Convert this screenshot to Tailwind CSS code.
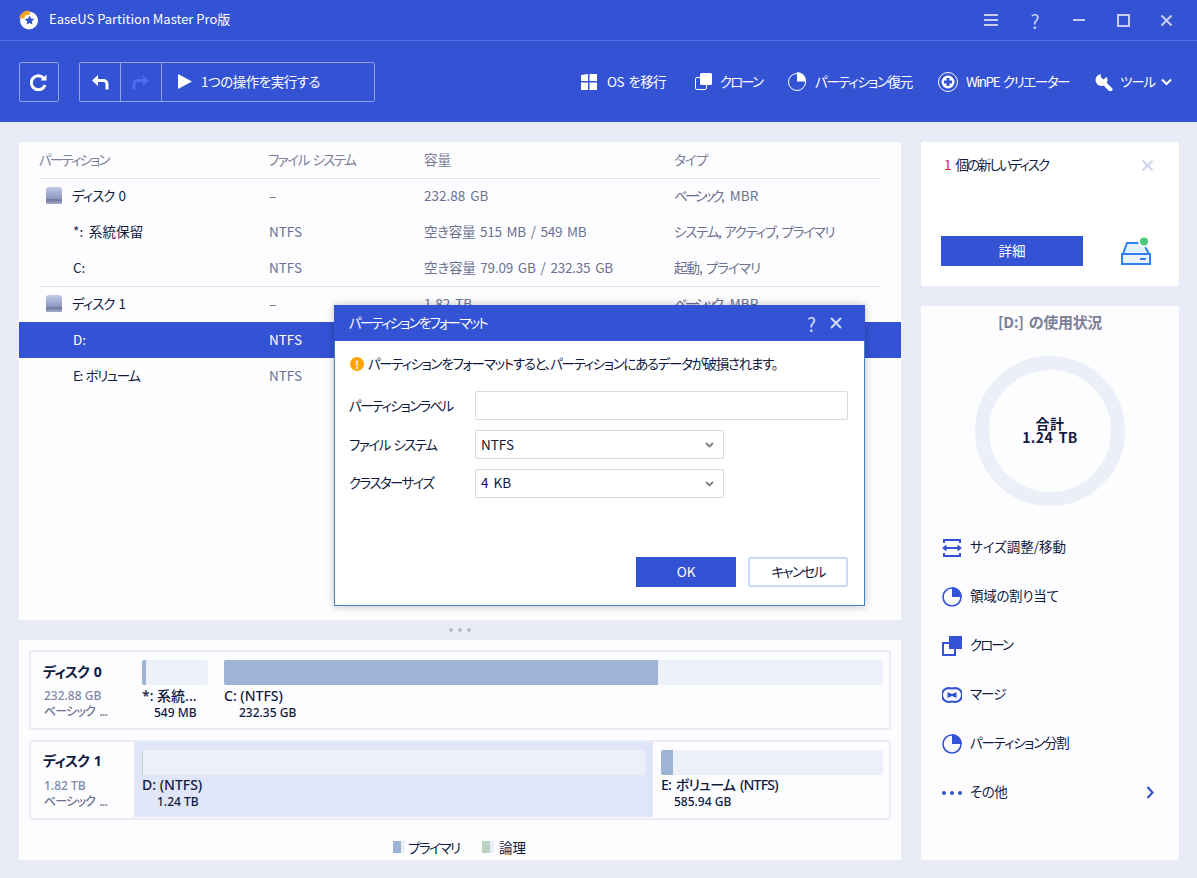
<!DOCTYPE html>
<html lang="ja">
<head>
    <meta charset="UTF-8">
    <title>EaseUS Partition Master</title>
    <script src="https://cdn.jsdelivr.net/npm/@tailwindcss/browser@4"></script>
</head>
<body class="bg-[#e9ecf7] overflow-hidden">
<div class="relative w-[1197px] h-[878px] text-[13.5px] text-[#101a3e] [word-spacing:2px] [font-feature-settings:'palt'] font-['Noto_Sans_CJK_JP','Noto_Sans',sans-serif]">

    <!-- Header -->
    <header class="h-[122px] bg-[#3353d4] text-white">
        <div class="h-[41px] border-b border-[#4f6fe4] flex items-center">
            <svg class="ml-[19px] w-[20px] h-[20px]" viewBox="0 0 20 20">
                <circle cx="10" cy="10.5" r="9" fill="#fff"/>
                <path d="M0 8A10 10 0 0 1 10 .5L11 4.500 6.500 5.500 5 8.500z" fill="#f5a623"/>
                <path d="M10.500 5.500l1.500 3 3.300.4-2.400 2.300.6 3.300-3-1.600-3 1.600.6-3.300-2.400-2.300 3.300-.4z" fill="#3353d4"/>
            </svg>
            <span class="ml-[10px] text-[13px] pb-[2px] [word-spacing:0]">EaseUS Partition Master Pro版</span>
            <div class="ml-auto flex items-center text-[#c5cff3]">
                <svg class="w-[14px] h-[12px]" viewBox="0 0 14 12" fill="currentColor"><path d="M0 0h14v2H0zM0 5h14v2H0zM0 10h14v2H0z"/></svg>
                <span class="ml-[30px] w-[14px] text-[19px] leading-none text-center">?</span>
                <svg class="ml-[30px] w-[14px] h-[2px]" viewBox="0 0 14 2" fill="currentColor"><path d="M1 0h12v2H1z"/></svg>
                <svg class="ml-[31px] w-[13px] h-[13px]" viewBox="0 0 13 13" fill="none" stroke="currentColor" stroke-width="2"><path d="M1 1h11v11H1z"/></svg>
                <svg class="ml-[30px] mr-[24px] w-[13px] h-[13px]" viewBox="0 0 13 13" fill="none" stroke="currentColor" stroke-width="2"><path d="M1.500 1.500l10 10M11.500 1.500l-10 10"/></svg>
            </div>
        </div>
        <div class="h-[81px] flex items-center pl-[19px]">
            <button class="w-[40px] h-[40px] border border-[#8fa2e8] rounded-[2px] flex items-center justify-center">
                <svg class="w-[18px] h-[18px]" viewBox="0 0 18 18" fill="none" stroke="#fff" stroke-width="3"><path d="M15 12a7 7 0 1 1-1.500-7"/><path d="M16.500 1.500v6h-6z" fill="#fff" stroke="none"/></svg>
            </button>
            <div class="ml-[20px] w-[296px] h-[40px] border border-[#8fa2e8] rounded-[2px] flex items-center">
                <div class="w-[41px] h-full border-r border-[#8fa2e8] flex items-center justify-center">
                    <svg class="w-[18px] h-[16px]" viewBox="0 0 18 16" fill="none"><path d="M7 1L1 6.500 7 12z" fill="#fff"/><path d="M5 6.500h7.500a3.500 3.500 0 0 1 3.500 3.500v5.500" stroke="#fff" stroke-width="3"/></svg>
                </div>
                <div class="w-[41px] h-full border-r border-[#8fa2e8] flex items-center justify-center">
                    <svg class="w-[18px] h-[16px]" viewBox="0 0 18 16" fill="none"><path d="M11 1l6 5.500L11 12z" fill="#4d6df0"/><path d="M13 6.500H5.500A3.500 3.500 0 0 0 2 10v5.500" stroke="#4d6df0" stroke-width="3"/></svg>
                </div>
                <svg class="ml-[16px] w-[14px] h-[15px]" viewBox="0 0 14 15" fill="#fff"><path d="M0 0l14 7.500L0 15z"/></svg>
                <span class="ml-[9px] tracking-[-0.5px]">1つの操作を実行する</span>
            </div>
            <div class="ml-[206px] flex items-center">
                <div class="w-[114px] flex items-center">
                    <svg class="w-[16px] h-[16px]" viewBox="0 0 16 16" fill="#fff"><path d="M0 1l7-1v7H0zM8.500 0L16 0v7H8.500zM0 8.500h7V16H0zM8.500 8.500H16V16H8.500z"/></svg>
                    <span class="ml-[10px] tracking-[-0.6px]">OS を移行</span>
                </div>
                <div class="w-[93px] flex items-center">
                    <svg class="w-[17px] h-[17px]" viewBox="0 0 17 17"><rect x="0.500" y="4.500" width="11" height="12" rx="1.500" fill="none" stroke="#fff"/><rect x="5" y="0" width="12" height="12" rx="1.500" fill="#fff"/></svg>
                    <span class="ml-[8px] tracking-[-2px]">クローン</span>
                </div>
                <div class="w-[150px] flex items-center">
                    <svg class="w-[18px] h-[19px]" viewBox="0 0 18 19"><circle cx="9" cy="10" r="8.500" fill="none" stroke="#fff"/><path d="M9 0a9 9 0 0 1 9 9.500H9z" fill="#fff"/></svg>
                    <span class="ml-[9px] tracking-[-1.4px]">パーティション復元</span>
                </div>
                <div class="w-[157px] flex items-center">
                    <svg class="w-[20px] h-[20px]" viewBox="0 0 20 20"><circle cx="10" cy="10" r="9.500" fill="none" stroke="#fff"/><circle cx="10" cy="10" r="6.500" fill="#fff"/><path d="M8.500 6h3v2.500H14v3h-2.500V14h-3v-2.500H6v-3h2.500z" fill="#3353d4"/></svg>
                    <span class="ml-[8px] tracking-[-1.4px]">WinPE クリエーター</span>
                </div>
                <div class="flex items-center">
                    <svg class="w-[18px] h-[18px]" viewBox="0 0 18 18"><path d="M8 9l7.500 7.500" stroke="#fff" stroke-width="4" stroke-linecap="round"/><circle cx="6.500" cy="7" r="6" fill="#fff"/><path d="M5.500 -1L6 4.500 8.500 6.500 13.500 2.500 11 -1z" fill="#3353d4"/><path d="M9.500 1l2.500 1.500-1.500 2z" fill="#3353d4"/></svg>
                    <span class="ml-[7px] tracking-[-1.2px]">ツール</span>
                    <svg class="ml-[6px] w-[11px] h-[8px]" viewBox="0 0 11 8" fill="none" stroke="#fff" stroke-width="2"><path d="M1 1.500l4.500 4.500L10 1.500"/></svg>
                </div>
            </div>
        </div>
    </header>

    <main class="pl-[19px] pt-[20px] flex gap-[20px]">
        <!-- Left column -->
        <div class="w-[882px]">
            <section class="h-[478px] bg-[#fdfdff]">
                <div class="mx-[20px] h-[36px] pb-[2px] grid grid-cols-[229px_156px_250px_1fr] items-center text-[#7b8099]">
                    <span class="tracking-[-1.8px]">パーティション</span><span class="tracking-[-1.5px]">ファイル システム</span><span>容量</span><span class="tracking-[-1px]">タイプ</span>
                </div>
                <div class="mx-[20px] h-[36px] pb-[2px] border-t border-[#dfe3f2] grid grid-cols-[229px_156px_250px_1fr] items-center text-[#6b7290]">
                    <span class="flex items-center pl-[7px] text-[#101a3e]">
                        <svg class="w-[16px] h-[17px]" viewBox="0 0 16 17"><defs><linearGradient id="hd" x1="0" y1="0" x2="0" y2="1"><stop offset="0" stop-color="#c3cbe8"/><stop offset=".7" stop-color="#8b95c2"/><stop offset=".75" stop-color="#6a749f"/><stop offset="1" stop-color="#a6aed0"/></linearGradient></defs><path d="M3 0h10a3 3 0 0 1 3 3v13a1 1 0 0 1-1 1H1a1 1 0 0 1-1-1V3a3 3 0 0 1 3-3z" fill="url(#hd)"/></svg>
                        <span class="ml-[10px] tracking-[-1px]">ディスク 0</span>
                    </span>
                    <span class="pl-px">–</span><span>232.88 GB</span><span><span class="tracking-[-3px]">ベーシック</span>, MBR</span>
                </div>
                <div class="mx-[20px] h-[36px] pb-[2px] grid grid-cols-[229px_156px_250px_1fr] items-center text-[#6b7290]">
                    <span class="pl-[34px] text-[#101a3e] tracking-[0.2px]">*: 系統保留</span><span class="pl-px">NTFS</span><span class="tracking-[-0.25px]">空き容量 515 MB / 549 MB</span><span class="tracking-[-1.3px]">システム, アクティブ, プライマリ</span>
                </div>
                <div class="mx-[20px] h-[36px] pb-[2px] grid grid-cols-[229px_156px_250px_1fr] items-center text-[#6b7290]">
                    <span class="pl-[34px] text-[#101a3e]">C:</span><span class="pl-px">NTFS</span><span class="tracking-[-0.2px]">空き容量 79.09 GB / 232.35 GB</span><span class="tracking-[-1px]">起動, プライマリ</span>
                </div>
                <div class="mx-[20px] h-[36px] pb-[2px] border-t border-[#dfe3f2] grid grid-cols-[229px_156px_250px_1fr] items-center text-[#6b7290]">
                    <span class="flex items-center pl-[7px] text-[#101a3e]">
                        <svg class="w-[16px] h-[17px]" viewBox="0 0 16 17"><path d="M3 0h10a3 3 0 0 1 3 3v13a1 1 0 0 1-1 1H1a1 1 0 0 1-1-1V3a3 3 0 0 1 3-3z" fill="url(#hd)"/></svg>
                        <span class="ml-[10px] tracking-[-1px]">ディスク 1</span>
                    </span>
                    <span class="pl-px">–</span><span>1.82 TB</span><span><span class="tracking-[-3px]">ベーシック</span>, MBR</span>
                </div>
                <div class="px-[20px] h-[36px] pb-[2px] bg-[#3353d4] text-white grid grid-cols-[229px_156px_250px_1fr] items-center">
                    <span class="pl-[34px]">D:</span><span class="pl-px">NTFS</span><span></span><span></span>
                </div>
                <div class="mx-[20px] h-[36px] pb-[2px] grid grid-cols-[229px_156px_250px_1fr] items-center text-[#6b7290]">
                    <span class="pl-[34px] text-[#101a3e] tracking-[-1.4px]">E: ボリューム</span><span class="pl-px">NTFS</span><span></span><span></span>
                </div>
            </section>

            <!-- Splitter -->
            <div class="h-[20px] flex items-center justify-center gap-[5px]">
                <i class="w-[4px] h-[4px] rounded-full bg-[#b9bdcb]"></i><i class="w-[4px] h-[4px] rounded-full bg-[#b9bdcb]"></i><i class="w-[4px] h-[4px] rounded-full bg-[#b9bdcb]"></i>
            </div>

            <!-- Disk map -->
            <section class="h-[220px] bg-[#fdfdff] px-[10px] pt-[10px] font-['Noto_Sans','Noto_Sans_CJK_JP',sans-serif] text-[12px] font-medium">
                <div class="h-[80px] border-2 border-[#e9ecf5] rounded-[3px] flex">
                    <div class="w-[103px] pl-[12px] pt-[10px]">
                        <div class="text-[14px] font-bold leading-[20px] tracking-[-0.8px]">ディスク 0</div>
                        <div class="pl-px mt-[6px] leading-[16px] text-[#7f88a8] [word-spacing:0]">232.88 GB</div>
                        <div class="pl-px leading-[16px] text-[#6b7290] tracking-[-0.8px]">ベーシック ...</div>
                    </div>
                    <div class="w-[66px] ml-[8px] pt-[8px]">
                        <div class="h-[25px] bg-[#ecf0f9] rounded-[2px] overflow-hidden"><div class="w-[4px] h-full bg-[#9db4d6]"></div></div>
                        <div class="text-[14px] leading-[18px] mt-[2px] whitespace-nowrap [word-spacing:0]">*: 系統...</div>
                        <div class="pl-[12px] leading-[16px] [word-spacing:0]">549 MB</div>
                    </div>
                    <div class="w-[659px] ml-[16px] pt-[8px]">
                        <div class="h-[25px] bg-[#ecf0f9] rounded-[2px] overflow-hidden"><div class="w-[434px] h-full bg-[#9db4d6]"></div></div>
                        <div class="text-[14px] leading-[18px] mt-[2px] [word-spacing:0]">C: (NTFS)</div>
                        <div class="pl-[15px] leading-[16px] [word-spacing:0]">232.35 GB</div>
                    </div>
                </div>
                <div class="mt-[10px] h-[80px] border-2 border-[#e9ecf5] rounded-[3px] flex">
                    <div class="w-[103px] pl-[12px] pt-[9px]">
                        <div class="text-[14px] font-bold leading-[20px] tracking-[-0.8px]">ディスク 1</div>
                        <div class="pl-px mt-[7px] leading-[16px] text-[#7f88a8] [word-spacing:0]">1.82 TB</div>
                        <div class="pl-px leading-[16px] text-[#6b7290] tracking-[-0.8px]">ベーシック ...</div>
                    </div>
                    <div class="w-[519px] h-[75px] bg-[#e1e5f8] px-[8px] pt-[8px]">
                        <div class="h-[25px] bg-[#ecf0f9] border-l border-[#bcd3c3]"></div>
                        <div class="text-[14px] leading-[18px] mt-[1px] [word-spacing:0]">D: (NTFS)</div>
                        <div class="pl-[15px] leading-[16px] [word-spacing:0]">1.24 TB</div>
                    </div>
                    <div class="w-[222px] ml-[8px] pt-[8px]">
                        <div class="h-[25px] bg-[#ecf0f9] rounded-[2px] overflow-hidden"><div class="w-[12px] h-full bg-[#9db4d6]"></div></div>
                        <div class="text-[14px] leading-[18px] mt-[1px] tracking-[-0.8px]">E: ボリューム (NTFS)</div>
                        <div class="pl-[13px] leading-[16px] [word-spacing:0]">585.94 GB</div>
                    </div>
                </div>
                <div class="mt-[17px] ml-[364px] flex items-center font-['Noto_Sans_CJK_JP',sans-serif] font-normal text-[13.5px]">
                    <i class="w-[8px] h-[12px] bg-[#9db4d6]"></i><i class="w-[4px] h-[12px] bg-[#ecf0f9]"></i>
                    <span class="ml-[3px] w-[74px] tracking-[-1.5px]">プライマリ</span>
                    <i class="w-[8px] h-[12px] bg-[#bcd3c3]"></i><i class="w-[4px] h-[12px] bg-[#ecf0f9]"></i>
                    <span class="ml-[5px]">論理</span>
                </div>
            </section>
        </div>

        <!-- Right column -->
        <aside class="w-[258px] flex flex-col gap-[20px]">
            <section class="h-[144px] bg-white rounded-[2px] px-[20px] pt-[12px] relative">
                <div class="flex items-center leading-[20px]">
                    <span class="ml-[3px] text-[#d0282e]">1</span><span class="ml-[4px] tracking-[-2px]">個の新しいディスク</span>
                    <svg class="ml-auto mr-[6px] mt-[2px] w-[11px] h-[11px]" viewBox="0 0 11 11" fill="none" stroke="#cdd6f0" stroke-width="2"><path d="M.5.5l10 10M10.500.5l-10 10"/></svg>
                </div>
                <div class="mt-[62px] flex items-center">
                    <button class="w-[142px] h-[30px] pb-[2px] bg-[#3353d4] text-white">詳細</button>
                    <svg class="ml-[38px] w-[30px] h-[28px]" viewBox="0 0 30 28" fill="none">
                        <path d="M2 17L6 6h16l6 11z" fill="#e3f0fe" stroke="#2f80f0" stroke-width="2"/>
                        <path d="M1 17h28v10H1z" fill="#eaf3ff" stroke="#2f80f0" stroke-width="2"/>
                        <path d="M19 21h6v2h-6z" fill="#2f80f0"/>
                        <circle cx="23" cy="4.500" r="6" fill="#fff"/><circle cx="23" cy="4.500" r="4" fill="#4cc97a"/>
                    </svg>
                </div>
            </section>

            <section class="h-[554px] bg-[#fdfdff] rounded-[2px]">
                <div class="pt-[4px] text-center text-[15px] text-[#7b8099] font-bold leading-[24px] tracking-[-0.3px]">[D:] の使用状況</div>
                <div class="mt-[22px] mx-auto w-[150px] h-[150px] rounded-full border-[14px] border-[#ebf0f8] flex items-center justify-center text-center text-[14px] tracking-[0.4px] font-bold leading-[14px]">
                    <span class="pb-[2px]">合計<br>1.24 TB</span>
                </div>
                <ul class="mt-[17px] pl-[21px]">
                    <li class="h-[49px] flex items-center">
                        <svg class="w-[20px] h-[18px]" viewBox="0 0 20 18" fill="#3353d4"><path d="M1 0h18v2H1zM1 16h18v2H1zM1 2h2v2H1zM17 2h2v2h-2zM1 14h2v2H1zM17 14h2v2h-2z"/><path d="M0 9l4.500-3.500V8h11V5.500L20 9l-4.500 3.500V10h-11v2.500z"/></svg>
                        <span class="ml-[8px] pb-[2px]">サイズ調整/移動</span>
                    </li>
                    <li class="h-[49px] flex items-center">
                        <svg class="w-[20px] h-[20px]" viewBox="0 0 20 20"><circle cx="10" cy="10" r="9" fill="none" stroke="#3353d4" stroke-width="1.600"/><path d="M10 0a10 10 0 0 1 10 10H10z" fill="#3353d4"/></svg>
                        <span class="ml-[8px] pb-[2px] tracking-[-0.3px]">領域の割り当て</span>
                    </li>
                    <li class="h-[49px] flex items-center">
                        <svg class="w-[20px] h-[20px]" viewBox="0 0 20 20"><rect x="1" y="7" width="12" height="12" fill="none" stroke="#3353d4" stroke-width="2"/><rect x="7" y="0" width="13" height="13" fill="#3353d4"/></svg>
                        <span class="ml-[8px] pb-[2px] tracking-[-2px]">クローン</span>
                    </li>
                    <li class="h-[49px] flex items-center">
                        <svg class="w-[20px] h-[16px]" viewBox="0 0 20 16"><path d="M7 1Q10 2 13 1A7 7 0 0 1 13 15Q10 14 7 15A7 7 0 0 1 7 1z" fill="none" stroke="#3353d4" stroke-width="2"/><path d="M5.500 5L10 7l4.500-2v6L10 9l-4.500 2z" fill="#3353d4"/></svg>
                        <span class="ml-[8px] pb-[2px] tracking-[-1px]">マージ</span>
                    </li>
                    <li class="h-[49px] flex items-center">
                        <svg class="w-[20px] h-[20px]" viewBox="0 0 20 20"><circle cx="10" cy="10" r="9" fill="none" stroke="#3353d4" stroke-width="1.600"/><path d="M10 0a10 10 0 0 1 10 10H10z" fill="#3353d4"/></svg>
                        <span class="ml-[8px] pb-[2px] tracking-[-1.2px]">パーティション分割</span>
                    </li>
                    <li class="h-[49px] flex items-center justify-between pr-[25px]">
                        <span class="flex items-center">
                            <svg class="w-[20px] h-[4px]" viewBox="0 0 20 4" fill="#3353d4"><circle cx="2" cy="2" r="2"/><circle cx="10" cy="2" r="2"/><circle cx="18" cy="2" r="2"/></svg>
                            <span class="ml-[8px] pb-[2px] tracking-[-0.5px]">その他</span>
                        </span>
                        <svg class="w-[8px] h-[13px]" viewBox="0 0 8 13" fill="none" stroke="#3353d4" stroke-width="2.200"><path d="M1.500 1l5 5.500-5 5.500"/></svg>
                    </li>
                </ul>
            </section>
        </aside>
    </main>

    <!-- Format dialog -->
    <div class="absolute left-[334px] top-[305px] w-[531px] h-[301px] bg-white border border-[#3d85c6] shadow-[0_0_8px_rgba(0,0,0,0.25)]">
        <div class="h-[36px] -mt-px -mx-px bg-[#3353d4] text-white flex items-center pl-[15px]">
            <span class="pb-[2px] tracking-[-1.8px]">パーティションをフォーマット</span>
            <span class="ml-auto text-[#d3dbf7] text-[19px] leading-none">?</span>
            <svg class="ml-[14px] mr-[23px] w-[12px] h-[12px]" viewBox="0 0 12 12" fill="none" stroke="#d3dbf7" stroke-width="2"><path d="M1 1l10 10M11 1L1 11"/></svg>
        </div>
        <div class="pl-[14px] pr-[16px]">
            <div class="h-[46px] flex items-center">
                <span class="ml-px w-[14px] h-[14px] rounded-full bg-[#ffa500] text-white text-[11px] leading-[14px] font-bold text-center">!</span>
                <span class="ml-[4px] pb-[2px] whitespace-nowrap tracking-[-1.3px]">パーティションをフォーマットすると、パーティションにあるデータが破損されます。</span>
            </div>
            <div class="flex items-center h-[29px] mt-[4px]">
                <label class="w-[126px] tracking-[-1.7px]">パーティションラベル</label>
                <input class="w-[373px] h-[29px] border border-[#d3dae8] rounded-[2px]">
            </div>
            <div class="flex items-center h-[29px] mt-[10px]">
                <label class="w-[126px] tracking-[-1.5px]">ファイル システム</label>
                <div class="w-[249px] h-[29px] border border-[#d3dae8] rounded-[2px] flex items-center pl-[5px]">
                    <span>NTFS</span>
                    <svg class="ml-auto mr-[9px] w-[9px] h-[6px]" viewBox="0 0 9 6" fill="none" stroke="#808080" stroke-width="1.800"><path d="M1 1l3.500 3.500L8 1"/></svg>
                </div>
            </div>
            <div class="flex items-center h-[29px] mt-[10px]">
                <label class="w-[126px] pb-[2px] tracking-[-1.6px]">クラスターサイズ</label>
                <div class="w-[249px] h-[29px] border border-[#d3dae8] rounded-[2px] flex items-center pl-[5px]">
                    <span class="pb-[2px]">4 KB</span>
                    <svg class="ml-auto mr-[9px] w-[9px] h-[6px]" viewBox="0 0 9 6" fill="none" stroke="#808080" stroke-width="1.800"><path d="M1 1l3.500 3.500L8 1"/></svg>
                </div>
            </div>
            <div class="mt-[59px] flex justify-end gap-[12px]">
                <button class="w-[100px] h-[30px] pb-[2px] bg-[#3353d4] text-white">OK</button>
                <button class="w-[100px] h-[30px] pb-[2px] border-2 border-[#c8dcf5] rounded-[2px] tracking-[-1.6px]">キャンセル</button>
            </div>
        </div>
    </div>
</div>
</body>
</html>
